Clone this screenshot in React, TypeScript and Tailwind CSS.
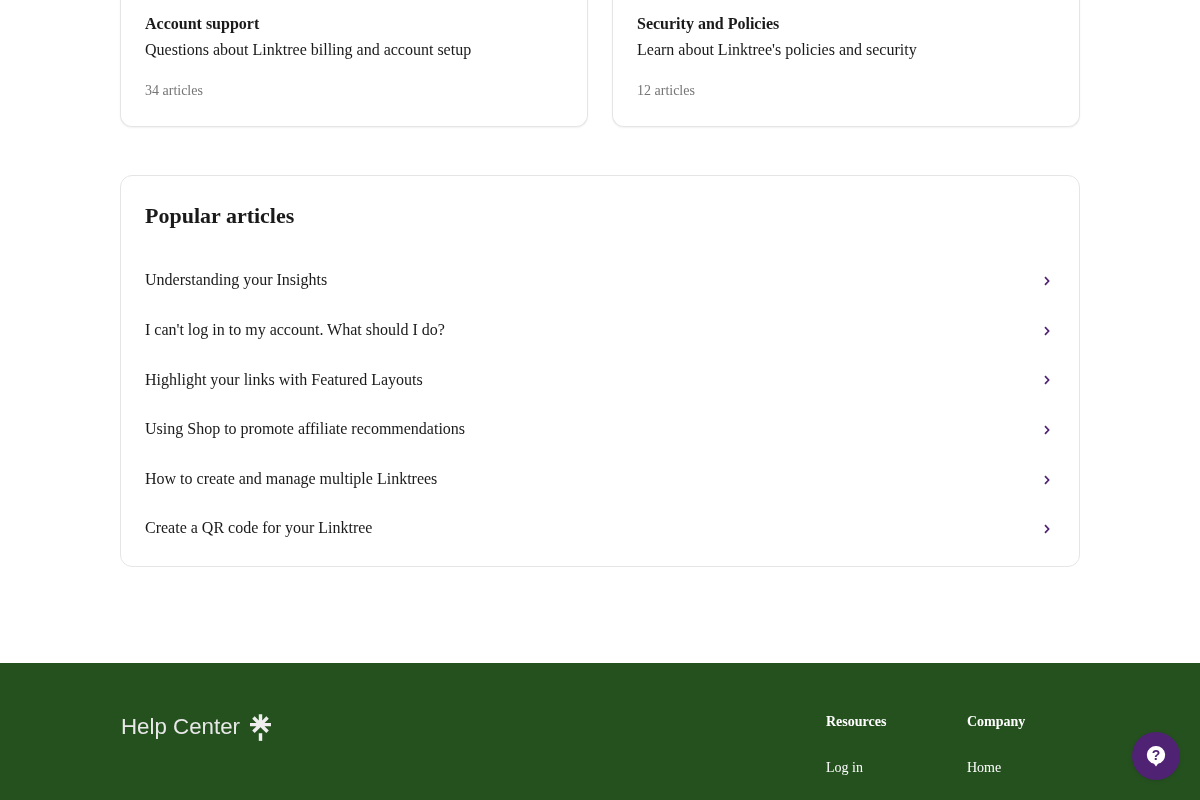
const popular = [
  "Understanding your Insights",
  "I can't log in to my account. What should I do?",
  "Highlight your links with Featured Layouts",
  "Using Shop to promote affiliate recommendations",
  "How to create and manage multiple Linktrees",
  "Create a QR code for your Linktree",
];

function TopCard({ title, text, count }: { title: string; text: string; count: string }) {
  return (
    <div className="flex-1 rounded-b-xl border border-t-0 border-[#e5e5e5] bg-white px-6 pb-6 pt-[51px] shadow-[0_1px_2px_rgba(0,0,0,0.06)]">
      <h3 className="text-base font-bold leading-[25.6px] text-[#1a1a1a]">{title}</h3>
      <p className="text-base leading-[26px] text-[#1a1a1a]">{text}</p>
      <p className="mt-[17px] text-sm leading-[22px] text-[#757575]">{count}</p>
    </div>
  );
}

export default function App() {
  return (
    <div className="relative h-[800px] overflow-hidden font-['Liberation_Serif',serif] [will-change:transform]">
      <main className="mx-auto -mt-[40px] w-[960px]">
        <div className="flex gap-6">
          <TopCard title="Account support" text="Questions about Linktree billing and account setup" count="34 articles" />
          <TopCard title="Security and Policies" text="Learn about Linktree's policies and security" count="12 articles" />
        </div>
        <section className="mt-[48px] rounded-xl border border-[#e5e5e5] bg-white px-6 pb-[13px] pt-[25px]">
          <h2 className="text-[22px] font-bold leading-[30px] text-[#1a1a1a]">Popular articles</h2>
          <ul className="mt-[25px]">
            {popular.map((p) => (
              <li key={p} className="flex h-[49.6px] items-center justify-between pr-[5px] text-base text-[#1a1a1a]">
                <span>{p}</span>
                <svg width="6" height="10" viewBox="0 0 6 10" fill="none" className="mt-[1.8px] text-[#502274]" aria-hidden="true">
                  <path d="M1 1.2L4.6 5L1 8.8" stroke="currentColor" strokeWidth="1.7" />
                </svg>
              </li>
            ))}
          </ul>
        </section>
      </main>
      <footer className="mt-[96px] h-[137px] bg-[#25511f]">
        <div className="mx-auto flex w-[960px] justify-between pt-[48px]">
          <div className="ml-[1px] mt-[2px] flex items-center gap-[10px] self-start">
            <span className="font-['Liberation_Sans',sans-serif] text-[22.3px] leading-[28px] text-[#e8e8e8]">Help Center</span>
            <svg width="21" height="27" viewBox="0 0 22 28" fill="#eeeeee" aria-hidden="true">
              <path d="M9.2 0h3.6v6.6l4.3-4.4 2.6 2.6-4.5 4.4H22v3.6h-6.8l4.5 4.4-2.6 2.6L11 13.7l-6.1 6.1-2.6-2.6 4.5-4.4H0V9.2h6.8L2.3 4.8l2.6-2.6 4.3 4.4V0z" />
              <rect x="9.2" y="20" width="3.6" height="8" />
            </svg>
          </div>
          <div className="flex">
            <div className="w-[141px]">
              <h4 className="text-sm font-bold leading-[22px] text-white">Resources</h4>
              <a className="mt-[24px] block text-sm leading-[22px] text-white">Log in</a>
            </div>
            <div className="w-[113px]">
              <h4 className="text-sm font-bold leading-[22px] text-white">Company</h4>
              <a className="mt-[24px] block text-sm leading-[22px] text-white">Home</a>
            </div>
          </div>
        </div>
      </footer>
      <button className="absolute bottom-[20px] right-[20px] flex h-12 w-12 items-center justify-center rounded-full bg-[#502274] shadow-[0_1px_4px_rgba(0,0,0,0.12)]">
        <svg width="20" height="22" viewBox="0 0 20 22" aria-hidden="true">
          <path fill="white" d="M10 1a9 9 0 0 1 2 17.8L10 21.5 8 18.8A9 9 0 0 1 10 1z" />
          <text x="10" y="15" textAnchor="middle" fontSize="14" fontWeight="700" fontFamily="Liberation Sans, sans-serif" fill="#502274">?</text>
        </svg>
      </button>
    </div>
  );
}
